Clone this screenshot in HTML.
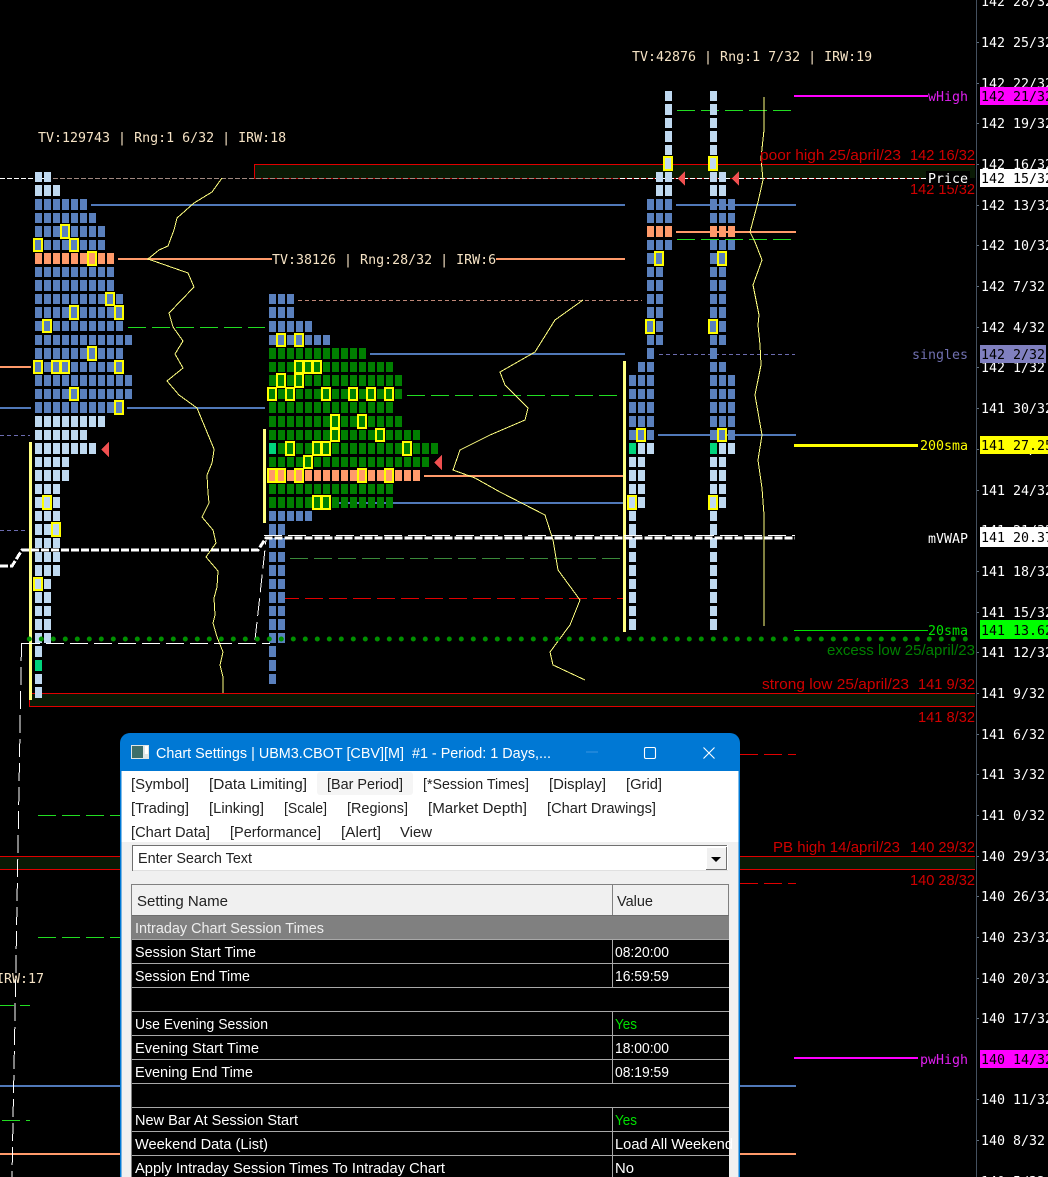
<!DOCTYPE html>
<html><head><meta charset="utf-8"><title>Chart Settings</title>
<style>
html,body{margin:0;padding:0;background:#000;overflow:hidden}
svg{display:block}
.m{font-family:"DejaVu Sans Mono","Liberation Mono",monospace;font-size:13.3px;white-space:pre}
.s{font-family:"Liberation Sans",sans-serif;font-size:14.5px;white-space:pre}
.r{font-family:"Liberation Sans",sans-serif;font-size:15px;white-space:pre}
.g{shape-rendering:crispEdges;fill:none}
</style></head><body>
<svg width="1048" height="1177" viewBox="0 0 1048 1177" xmlns="http://www.w3.org/2000/svg">
<rect width="1048" height="1177" fill="#000"/>

<!-- bands -->
<g class="g">
<rect x="254" y="165" width="721" height="13" fill="#0a1a05"/>
<rect x="30" y="694" width="945" height="12" fill="#0a1a05"/>
<rect x="0" y="857" width="975" height="12" fill="#0a1a05"/>
<path stroke="#e00000" d="M254 164.5H975M254.5 164V178M30 693.5H975M29.5 693V706M29 706.5H975M0 856.5H975M0 869.5H975"/>
<path stroke="#b00000" d="M254 178.5H925"/>
<path stroke="#fff" stroke-dasharray="5 2" d="M0 178.5H50M620 178.5H928"/>
<path stroke="#a08880" stroke-dasharray="5 2" d="M53 178.5H620"/>

<!-- blue lines -->
<path stroke="#5078b8" stroke-width="2" d="M91 205H625M676 205H796M0 408H31M127 408H265M370 354H625M334 503H625M658 435H796M0 1086H122M738 1086H796"/>
<!-- orange lines -->
<path stroke="#ff9a6a" stroke-width="2" d="M118 259H272M496 259H625M0 367H31M424 476H625M676 232H796M0 1154H122M738 1154H796"/>
<!-- lime dashes -->
<path stroke="#22dd22" stroke-dasharray="18 6" d="M128 327.5H265M407 395.5H625M677 110.5H792M677 239.5H792M38 815.5H120M38 937.5H120"/>
<path stroke="#3a8a3a" stroke-dasharray="18 6" d="M290 558.5H625"/>
<path stroke="#22dd22" d="M0 1005.5H14M20 1005.5H30M2 1120.5H20M26 1120.5H30"/>
<!-- red dashes -->
<path stroke="#e00000" stroke-dasharray="18 6" d="M281 598.5H625M740 754.5H796M740 883.5H796"/>
<!-- peach, lavender -->
<path stroke="#c08878" stroke-dasharray="4 3" d="M298 300.5H642"/>
<path stroke="#6c6cb0" stroke-dasharray="4 3" d="M0 435.5H30M0 530.5H26M659 354.5H795"/>

<!-- right label lines -->
<path stroke="#ff00ff" stroke-width="2" d="M794 96H928M794 1058H918"/>
<path stroke="#ffff00" stroke-width="3" d="M794 445.5H918"/>
<path stroke="#00e000" d="M794 630.5H928"/>

<!-- yellow curves -->
<path stroke="#ffff80" d="M222 178L212 192L194 203L177 218L174 230L168 246L159 250L148 259L188 273L194 287L169 313L173 327L183 341L175 354L183 368L167 381L179 395L197 408L214 449L214 450L212 463L207 475L208 493L209 503L202 517L213 530L216 543L206 557L218 571L217 587L214 598L215 615L213 623L217 637L223 652L220 665L223 677L223 693"/>
<path stroke="#ffff80" d="M583 300L555 320L535 352L500 372L505 385L528 408L525 420L490 435L460 450L453 470L475 478L500 492L545 515L553 540L558 570L580 600L570 625L550 652L553 665L585 680"/>
<path stroke="#ffff80" d="M764 97L764 130L761 158L763 180L758 202L750 232L755 242L762 260L753 285L759 315L758 325L760 345L761 365L760 370L755 395L762 435L758 460L762 488L764 515L764 626"/>

<!-- blocks -->
<g stroke-dasharray="7 2">
<path stroke="#bfd9f0" stroke-width="10" d="M35 177h16M35 435h52M35 462h34M35 489h25M35 516h25M35 543h25M35 557h25M35 584h16M35 611h16M35 638h16M35 679h7M665 96h7M665 123h7M665 150h7M656 177h16M629 462h16M629 489h16M629 516h7M629 543h7M629 557h7M629 584h7M629 611h7M710 96h7M710 123h7M710 150h7M710 177h16M710 462h16M710 489h16M710 516h7M710 543h7M710 557h7M710 584h7M710 611h7"/>
<path stroke="#bfd9f0" stroke-width="11" d="M35 190.5h25M35 421.5h70M35 448.5h61M35 475.5h34M35 502.5h25M35 529.5h25M35 570.5h25M35 597.5h16M35 624.5h16M35 651.5h7M35 692.5h7M665 109.5h7M665 136.5h7M665 163.5h7M656 190.5h16M638 448.5h16M629 475.5h16M629 502.5h16M629 529.5h7M629 570.5h7M629 597.5h7M629 624.5h7M710 109.5h7M710 136.5h7M710 163.5h7M710 190.5h16M719 448.5h16M710 475.5h16M710 502.5h16M710 529.5h7M710 570.5h7M710 597.5h7M710 624.5h7"/>
<path stroke="#5a80bd" stroke-width="10" d="M35 218h61M35 245h70M35 272h79M35 299h88M35 326h88M35 340h97M35 367h88M35 394h97M269 299h25M269 340h61M269 516h43M269 543h16M269 557h16M269 584h16M269 611h16M269 638h16M269 679h7M647 218h25M647 245h25M647 272h16M647 299h16M647 340h16M638 367h16M629 394h25M629 435h25M710 218h25M710 245h25M710 272h16M710 299h16M710 340h16M710 367h16M710 394h25M710 435h25"/>
<path stroke="#5a80bd" stroke-width="11" d="M35 204.5h52M35 231.5h70M35 285.5h79M35 312.5h88M35 353.5h88M35 380.5h97M35 407.5h88M269 312.5h25M269 326.5h43M269 529.5h16M269 570.5h16M269 597.5h16M269 624.5h16M269 651.5h7M269 665.5h7M647 204.5h25M647 258.5h16M647 285.5h16M647 312.5h16M647 326.5h16M647 353.5h7M629 380.5h25M629 407.5h25M629 421.5h25M710 204.5h25M710 258.5h16M710 285.5h16M710 312.5h16M710 326.5h16M710 353.5h7M710 380.5h25M710 407.5h25M710 421.5h25"/>
<path stroke="#007f00" stroke-width="10" d="M269 367h124M269 394h133M269 435h151M269 462h160M269 489h124"/>
<path stroke="#007f00" stroke-width="11" d="M269 353.5h97M269 380.5h133M269 407.5h124M269 421.5h133M278 448.5h160M269 502.5h124"/>
<path stroke="#ff9a6a" stroke-width="11" d="M35 258.5h79M269 475.5h151M647 231.5h25M710 231.5h25"/>
</g>
<g fill="#00d47c" stroke="none">
<rect x="35" y="660" width="7" height="11"/><rect x="269" y="443" width="7" height="11"/><rect x="629" y="443" width="7" height="11"/><rect x="710" y="443" width="7" height="11"/>
</g>

<!-- yellow cell outlines -->
<path stroke="#ffff00" stroke-width="2" d="M61 225h8v13h-8zM34 239h8v12h-8zM70 239h8v12h-8zM88 252h8v13h-8zM106 293h8v12h-8zM70 306h8v13h-8zM115 306h8v13h-8zM43 320h8v12h-8zM88 347h8v13h-8zM34 361h8v12h-8zM52 361h8v12h-8zM61 361h8v12h-8zM115 361h8v12h-8zM70 388h8v12h-8zM115 401h8v13h-8zM43 496h8v13h-8zM52 523h8v13h-8zM34 578h8v12h-8zM277 334h8v12h-8zM295 334h8v12h-8zM295 361h8v12h-8zM304 361h8v12h-8zM313 361h8v12h-8zM277 374h8v13h-8zM295 374h8v13h-8zM268 388h8v12h-8zM286 388h8v12h-8zM322 388h8v12h-8zM349 388h8v12h-8zM367 388h8v12h-8zM385 388h8v12h-8zM331 415h8v13h-8zM358 415h8v13h-8zM331 429h8v12h-8zM376 429h8v12h-8zM286 442h8v13h-8zM313 442h8v13h-8zM322 442h8v13h-8zM403 442h8v13h-8zM304 456h8v12h-8zM268 469h8v13h-8zM277 469h8v13h-8zM295 469h8v13h-8zM358 469h8v13h-8zM385 469h8v13h-8zM313 496h8v13h-8zM322 496h8v13h-8zM664 157h8v13h-8zM655 252h8v13h-8zM646 320h8v13h-8zM637 429h8v12h-8zM628 496h8v13h-8zM709 157h8v13h-8zM718 252h8v13h-8zM709 320h8v13h-8zM718 429h8v12h-8zM709 496h8v13h-8z"/>

<!-- yellow bars -->
<g fill="#ffff80" stroke="none">
<rect x="29" y="442" width="3" height="258"/><rect x="263" y="429" width="3" height="94"/><rect x="623" y="361" width="3" height="271"/>
</g>
<!-- triangles -->
<g fill="#f05050" stroke="none">
<path d="M109 442V457L101 449.5Z"/><path d="M442 455V470L434 462.5Z"/><path d="M685 171V186L678 178.5Z"/><path d="M739 171V186L732 178.5Z"/>
</g>

<!-- thin white dashed -->
<path stroke="#fff" stroke-dasharray="18 6" d="M22 643.5H270M264 535.5H795"/>
<path stroke="#fff" stroke-dasharray="18 6" d="M21.5 643L15.5 990L13 1120L12 1177M255 640L266 540"/>
<!-- thick mVWAP -->
<path stroke="#fff" stroke-width="3" stroke-dasharray="8 2" d="M0 566H12L22 550H258L266 538H795"/>
<!-- axis -->
<path stroke="#44505f" d="M976.5 0V1177"/>
<path stroke="#607080" d="M977 42.5h2M977 83.5h2M977 123.5h2M977 164.5h2M977 205.5h2M977 245.5h2M977 286.5h2M977 327.5h2M977 367.5h2M977 408.5h2M977 449.5h2M977 490.5h2M977 571.5h2M977 612.5h2M977 652.5h2M977 693.5h2M977 734.5h2M977 774.5h2M977 815.5h2M977 856.5h2M977 896.5h2M977 937.5h2M977 978.5h2M977 1018.5h2M977 1099.5h2M977 1140.5h2"/>
</g>
<!-- dots -->
<path fill="none" stroke="#009000" stroke-width="5" stroke-linecap="round" stroke-dasharray="0.01 11.99" d="M29.3 639H970"/>

<!-- axis labels -->
<g class="m" fill="#fff">
<text x="981" y="6">142 28/32</text><text x="981" y="47">142 25/32</text><text x="981" y="88">142 22/32</text><text x="981" y="128">142 19/32</text><text x="981" y="169">142 16/32</text><text x="981" y="210">142 13/32</text><text x="981" y="250">142 10/32</text><text x="981" y="291">142 7/32</text><text x="981" y="332">142 4/32</text><text x="981" y="372">142 1/32</text><text x="981" y="413">141 30/32</text><text x="981" y="454">141 27/32</text><text x="981" y="495">141 24/32</text><text x="981" y="535">141 21/32</text><text x="981" y="576">141 18/32</text><text x="981" y="617">141 15/32</text><text x="981" y="657">141 12/32</text><text x="981" y="698">141 9/32</text><text x="981" y="739">141 6/32</text><text x="981" y="779">141 3/32</text><text x="981" y="820">141 0/32</text><text x="981" y="861">140 29/32</text><text x="981" y="901">140 26/32</text><text x="981" y="942">140 23/32</text><text x="981" y="983">140 20/32</text><text x="981" y="1023">140 17/32</text><text x="981" y="1064">140 14/32</text><text x="981" y="1104">140 11/32</text><text x="981" y="1145">140 8/32</text><text x="981" y="1186">140 5/32</text>
</g>
<g class="g">
<rect x="980" y="87" width="68" height="18" fill="#ff00ff"/>
<rect x="980" y="169" width="68" height="18" fill="#fff"/>
<rect x="980" y="345" width="66" height="18" fill="#8080c0"/>
<rect x="980" y="436" width="68" height="18" fill="#ffff00"/>
<rect x="980" y="527" width="68" height="20" fill="#fff"/>
<rect x="980" y="620" width="68" height="19" fill="#00ff00"/>
<rect x="980" y="1050" width="68" height="18" fill="#ff00ff"/>
</g>
<g class="m" fill="#000">
<text x="981" y="101">142 21/32</text><text x="981" y="183">142 15/32</text><text x="981" y="359">142 2/32</text><text x="981" y="450">141 27.25</text><text x="981" y="542">141 20.37</text><text x="981" y="635">141 13.62</text><text x="981" y="1064">140 14/32</text>
</g>

<!-- red / green proportional labels -->
<g class="r" fill="#d00000">
<text x="760" y="160" textLength="141" lengthAdjust="spacingAndGlyphs">poor high 25/april/23</text>
<text x="910" y="160" textLength="65" lengthAdjust="spacingAndGlyphs">142 16/32</text>
<text x="910" y="194" textLength="65" lengthAdjust="spacingAndGlyphs">142 15/32</text>
<text x="762" y="689" textLength="147" lengthAdjust="spacingAndGlyphs">strong low 25/april/23</text>
<text x="918" y="689" textLength="57" lengthAdjust="spacingAndGlyphs">141 9/32</text>
<text x="918" y="722" textLength="57" lengthAdjust="spacingAndGlyphs">141 8/32</text>
<text x="773" y="852" textLength="127" lengthAdjust="spacingAndGlyphs">PB high 14/april/23</text>
<text x="910" y="852" textLength="65" lengthAdjust="spacingAndGlyphs">140 29/32</text>
<text x="910" y="885" textLength="65" lengthAdjust="spacingAndGlyphs">140 28/32</text>
<text x="827" y="655" textLength="148" lengthAdjust="spacingAndGlyphs" fill="#008000">excess low 25/april/23</text>
</g>
<rect x="905" y="179" width="71" height="5" fill="#000"/>

<!-- chart mono labels -->
<g class="m">
<rect x="926" y="171" width="44" height="14" fill="#000"/>
<g fill="#f5e2c4">
<text x="38" y="142">TV:129743 | Rng:1 6/32 | IRW:18</text>
<text x="272" y="264">TV:38126 | Rng:28/32 | IRW:6</text>
<text x="632" y="61">TV:42876 | Rng:1 7/32 | IRW:19</text>
<text x="-4" y="983">IRW:17</text>
</g>
<text x="928" y="101" fill="#e020f0">wHigh</text>
<text x="928" y="183" fill="#fff">Price</text>
<text x="912" y="359" fill="#7070b0">singles</text>
<text x="920" y="450" fill="#ffff00">200sma</text>
<text x="928" y="543" fill="#fff">mVWAP</text>
<text x="928" y="635" fill="#00e000">20sma</text>
<text x="920" y="1064" fill="#e020f0">pwHigh</text>
</g>

<!-- dialog -->
<path d="M120 1177V743a10 10 0 0 1 10-10H730a10 10 0 0 1 10 10V1177Z" fill="#0078d4"/>
<rect x="121.5" y="771" width="617" height="406" fill="#f0f0f0"/>
<rect x="121.5" y="771" width="617" height="71" fill="#fff"/>
<rect x="317" y="772" width="96" height="23" rx="3" fill="#f5f5f5"/>
<!-- icon -->
<rect x="131" y="745" width="18" height="14" fill="#dfe6e6"/>
<rect x="132" y="746" width="11" height="12" fill="#3d6f6a"/>
<rect x="145" y="746" width="3" height="8" fill="#fff"/>
<text class="s" x="156" y="758" fill="#fff" textLength="395" lengthAdjust="spacingAndGlyphs">Chart Settings | UBM3.CBOT [CBV][M]  #1 - Period: 1 Days,...</text>
<!-- window buttons -->
<path d="M586 752h12" stroke="#3a94e0" stroke-width="1" fill="none"/>
<rect x="644.5" y="747.5" width="11" height="11" rx="1.5" fill="none" stroke="#fff" stroke-width="1.1"/>
<path d="M703.5 747.5L714.5 758.5M714.5 747.5L703.5 758.5" stroke="#fff" stroke-width="1.1" fill="none"/>

<g class="s" fill="#222">
<text x="131" y="789" textLength="58" lengthAdjust="spacingAndGlyphs">[Symbol]</text>
<text x="209" y="789" textLength="98" lengthAdjust="spacingAndGlyphs">[Data Limiting]</text>
<text x="327" y="789" textLength="76" lengthAdjust="spacingAndGlyphs">[Bar Period]</text>
<text x="423" y="789" textLength="106" lengthAdjust="spacingAndGlyphs">[*Session Times]</text>
<text x="549" y="789" textLength="57" lengthAdjust="spacingAndGlyphs">[Display]</text>
<text x="626" y="789" textLength="36" lengthAdjust="spacingAndGlyphs">[Grid]</text>
<text x="131" y="813" textLength="58" lengthAdjust="spacingAndGlyphs">[Trading]</text>
<text x="209" y="813" textLength="55" lengthAdjust="spacingAndGlyphs">[Linking]</text>
<text x="284" y="813" textLength="43" lengthAdjust="spacingAndGlyphs">[Scale]</text>
<text x="347" y="813" textLength="61" lengthAdjust="spacingAndGlyphs">[Regions]</text>
<text x="428" y="813" textLength="99" lengthAdjust="spacingAndGlyphs">[Market Depth]</text>
<text x="547" y="813" textLength="109" lengthAdjust="spacingAndGlyphs">[Chart Drawings]</text>
<text x="131" y="837" textLength="79" lengthAdjust="spacingAndGlyphs">[Chart Data]</text>
<text x="230" y="837" textLength="91" lengthAdjust="spacingAndGlyphs">[Performance]</text>
<text x="341" y="837" textLength="40" lengthAdjust="spacingAndGlyphs">[Alert]</text>
<text x="400" y="837" textLength="32" lengthAdjust="spacingAndGlyphs">View</text>
</g>

<!-- combo -->
<g class="g">
<rect x="132" y="845" width="596" height="26" fill="#fff"/>
<path stroke="#707070" d="M132.5 871V845.5H727"/>
<path stroke="#e0e0e0" d="M133 870.5H728"/>
<rect x="706" y="847" width="20" height="23" fill="#f0f0f0"/>
<path stroke="#707070" d="M726.5 847V870M706 869.5H727"/>
<path stroke="#fff" d="M706.5 847V869M706 847.5H726"/>
</g>
<path d="M711 857h10l-5 5z" fill="#000"/>
<text class="s" x="138" y="863" fill="#222" textLength="114" lengthAdjust="spacingAndGlyphs">Enter Search Text</text>

<!-- table -->
<g class="g">
<rect x="131" y="884" width="598" height="293" fill="#000"/>
<rect x="132" y="885" width="597" height="30" fill="#f0f0f0"/>
<path stroke="#808080" d="M131 884.5H729M131.5 884V1177M728.5 884V915M612.5 885V915"/>
<rect x="132" y="916" width="597" height="23" fill="#808080"/>
<path stroke="#6e6e6e" d="M132 915.5H729"/>
<path stroke="#a8a8a8" d="M132 939.5H729M132 963.5H729M132 987.5H729M132 1011.5H729M132 1035.5H729M132 1059.5H729M132 1083.5H729M132 1107.5H729M132 1131.5H729M132 1155.5H729M612.5 940V987M612.5 1012V1083M612.5 1108V1177"/>
</g>
<g class="s">
<text x="137" y="906" fill="#222" textLength="91" lengthAdjust="spacingAndGlyphs">Setting Name</text>
<text x="617" y="906" fill="#222" textLength="36" lengthAdjust="spacingAndGlyphs">Value</text>
<text x="135" y="933" fill="#eee" textLength="189" lengthAdjust="spacingAndGlyphs">Intraday Chart Session Times</text>
<g fill="#fff">
<text x="135" y="957" textLength="121" lengthAdjust="spacingAndGlyphs">Session Start Time</text>
<text x="135" y="981" textLength="115" lengthAdjust="spacingAndGlyphs">Session End Time</text>
<text x="135" y="1029" textLength="133" lengthAdjust="spacingAndGlyphs">Use Evening Session</text>
<text x="135" y="1053" textLength="124" lengthAdjust="spacingAndGlyphs">Evening Start Time</text>
<text x="135" y="1077" textLength="118" lengthAdjust="spacingAndGlyphs">Evening End Time</text>
<text x="135" y="1125" textLength="163" lengthAdjust="spacingAndGlyphs">New Bar At Session Start</text>
<text x="135" y="1149" textLength="133" lengthAdjust="spacingAndGlyphs">Weekend Data (List)</text>
<text x="135" y="1173" textLength="310" lengthAdjust="spacingAndGlyphs">Apply Intraday Session Times To Intraday Chart</text>
<text x="615" y="957" textLength="54" lengthAdjust="spacingAndGlyphs">08:20:00</text>
<text x="615" y="981" textLength="54" lengthAdjust="spacingAndGlyphs">16:59:59</text>
<text x="615" y="1053" textLength="54" lengthAdjust="spacingAndGlyphs">18:00:00</text>
<text x="615" y="1077" textLength="54" lengthAdjust="spacingAndGlyphs">08:19:59</text>
<text x="615" y="1149" textLength="118" lengthAdjust="spacingAndGlyphs">Load All Weekend</text>
<text x="615" y="1173" textLength="19" lengthAdjust="spacingAndGlyphs">No</text>
</g>
<text x="615" y="1029" fill="#00e000" textLength="22" lengthAdjust="spacingAndGlyphs">Yes</text>
<text x="615" y="1125" fill="#00e000" textLength="22" lengthAdjust="spacingAndGlyphs">Yes</text>
</g>
<rect x="729" y="884" width="9.5" height="293" fill="#f0f0f0" class="g"/>
<rect x="738.5" y="884" width="1.5" height="293" fill="#0078d4"/>
</svg>
</body></html>
